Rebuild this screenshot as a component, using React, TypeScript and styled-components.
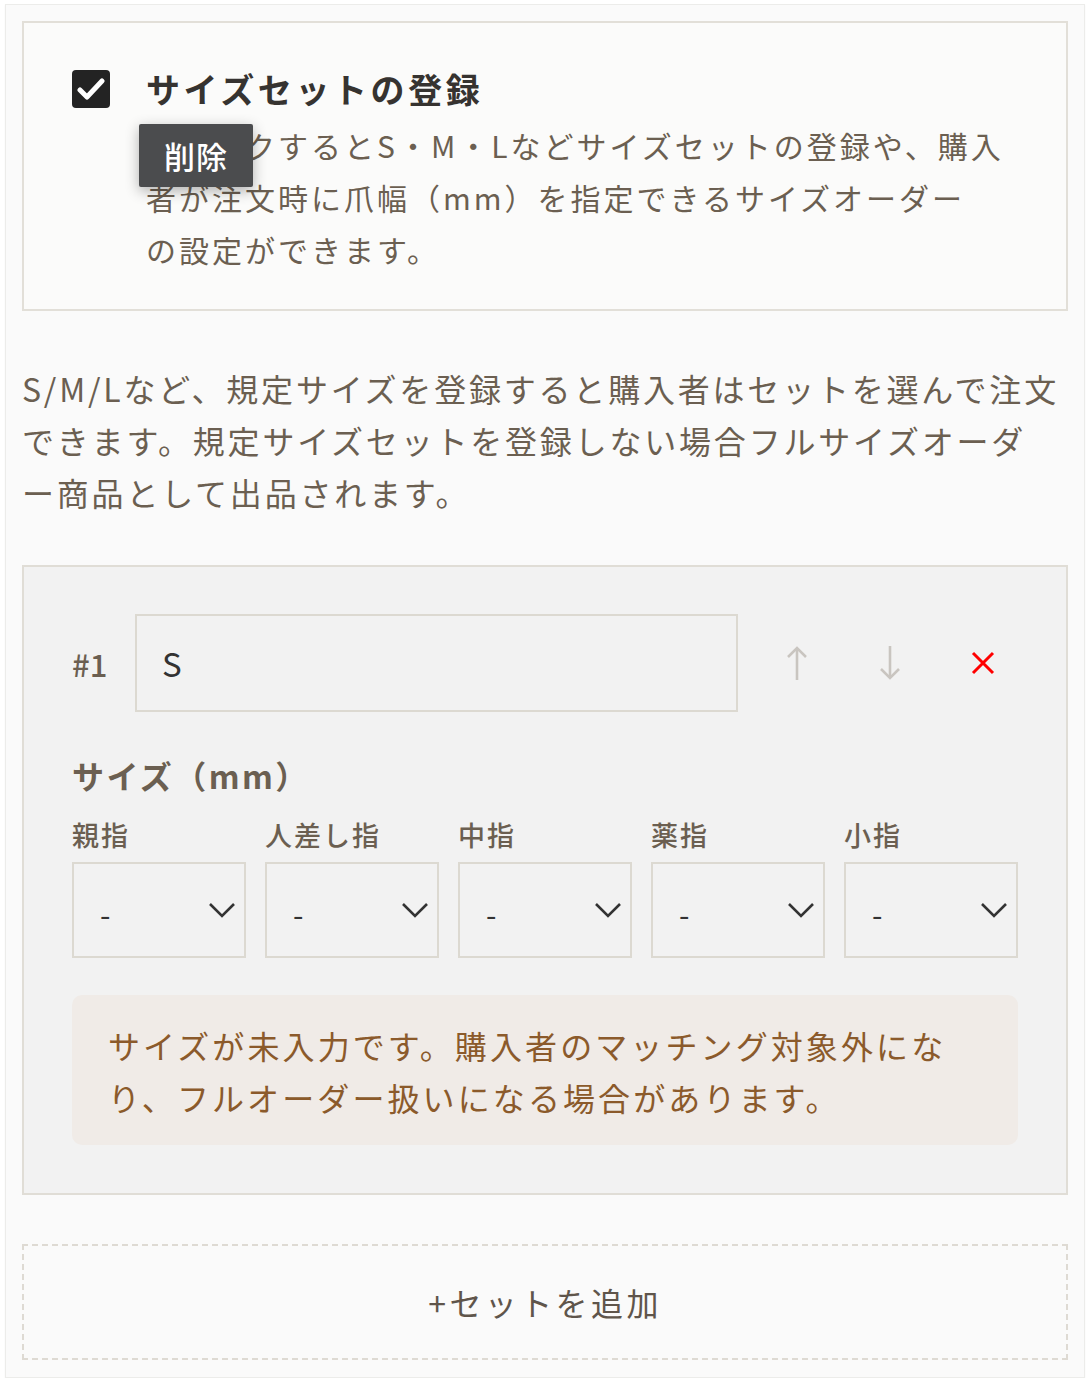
import React from "react";
import styled, { createGlobalStyle } from "styled-components";

const GlobalStyle = createGlobalStyle`
  body {
    margin: 0;
    background: #ffffff;
    font-family: "Noto Sans CJK JP", "Noto Sans", sans-serif;
  }
`;

const Card = styled.div`
  margin: 4px 5px 0;
  width: 1046px;
  padding: 16px 16px 17px;
  background: #fafafa;
  border: 1px solid #ececea;
  box-shadow: 0 1px 2px rgba(0, 0, 0, 0.04);
`;

const OptionBox = styled.div`
  position: relative;
  display: flex;
  gap: 36px;
  padding: 44px 48px 34px;
  border: 2px solid #e2dfd8;
  background: #fbfbfa;
`;

const CheckMark = styled.div`
  flex: none;
  width: 38px;
  height: 38px;
  margin-top: 3px;
  border-radius: 4px;
  background: #232323;
  display: flex;
  align-items: center;
  justify-content: center;
`;

const OptionText = styled.div`
  flex: 1;
`;

const OptionTitle = styled.div`
  margin-bottom: 8px;
  font-size: 34px;
  font-weight: 700;
  line-height: 44px;
  letter-spacing: 3.6px;
  color: #363330;
`;

const OptionDesc = styled.div`
  font-size: 30px;
  line-height: 52px;
  letter-spacing: 3px;
  color: #6b5f51;
`;

const Tooltip = styled.div`
  position: absolute;
  left: 115px;
  top: 101px;
  width: 114px;
  height: 63px;
  display: flex;
  align-items: center;
  justify-content: center;
  background: #4b4c4e;
  color: #ffffff;
  font-size: 31px;
  font-weight: 500;
  letter-spacing: 1px;
  border-radius: 2px;
  box-shadow: 0 4px 14px rgba(0, 0, 0, 0.3);
`;

const Lead = styled.p`
  margin: 51px 0 47px;
  font-size: 32px;
  line-height: 52px;
  letter-spacing: 2.8px;
  color: #6b5f51;
`;

const SetPanel = styled.div`
  padding: 47px 48px 48px;
  border: 2px solid #e0ddd6;
  background: #f2f2f2;
`;

const SetRow = styled.div`
  display: flex;
  align-items: center;
`;

const SetNumber = styled.div`
  width: 63px;
  flex: none;
  font-size: 31px;
  font-weight: 500;
  color: #6b5f51;
`;

const NameInput = styled.div`
  flex: 1;
  height: 94px;
  display: flex;
  align-items: center;
  padding: 0 25px;
  border: 2px solid #dcd9d1;
  font-size: 33px;
  color: #333;
`;

const Actions = styled.div`
  display: flex;
  gap: 47px;
  margin: 0 12px 0 36px;
`;

const IconButton = styled.button`
  width: 46px;
  height: 46px;
  padding: 0;
  border: none;
  background: none;
  display: flex;
  align-items: center;
  justify-content: center;
`;

const SizeHeading = styled.div`
  margin-top: 41px;
  font-size: 32px;
  font-weight: 700;
  line-height: 44px;
  letter-spacing: 2.4px;
  color: #6b5f51;
`;

const FingerGrid = styled.div`
  margin-top: 18px;
  display: grid;
  grid-template-columns: repeat(5, 1fr);
  gap: 7px 19px;
`;

const FingerLabel = styled.div`
  font-size: 27px;
  font-weight: 500;
  line-height: 40px;
  letter-spacing: 2px;
  color: #6b5f51;
`;

const SelectBox = styled.div`
  height: 92px;
  display: flex;
  align-items: center;
  justify-content: space-between;
  padding: 0 8px 0 26px;
  border: 2px solid #dcd9d1;
  font-size: 30px;
  color: #333;
`;

const Dash = styled.span`
  margin-top: 6px;
`;

const Notice = styled.div`
  margin-top: 37px;
  padding: 24px 36px 22px;
  border-radius: 10px;
  background: #f0ebe7;
  font-size: 32px;
  line-height: 52px;
  letter-spacing: 3.1px;
  color: #8b5a2b;
`;

const AddButton = styled.button`
  margin-top: 49px;
  width: 100%;
  height: 116px;
  border: 2px dashed #dedad3;
  background: transparent;
  font-family: inherit;
  font-size: 32px;
  letter-spacing: 3.4px;
  color: #5f554b;
`;

const Chevron = () => (
  <svg width="28" height="16" viewBox="0 0 28 16">
    <polyline points="2,2 14,14 26,2" fill="none" stroke="#333" strokeWidth="2.6" />
  </svg>
);

const Arrow = ({ down }: { down?: boolean }) => (
  <svg width="24" height="36" viewBox="0 0 24 36" style={down ? { transform: "rotate(180deg)" } : undefined}>
    <line x1="12" y1="3" x2="12" y2="35" stroke="#c9c5c0" strokeWidth="2.6" />
    <polyline points="3,12 12,3 21,12" fill="none" stroke="#c9c5c0" strokeWidth="2.6" />
  </svg>
);

const fingers = ["親指", "人差し指", "中指", "薬指", "小指"];

const App = () => {
  return (
    <Card>
      <GlobalStyle />
      <OptionBox>
        <CheckMark>
          <svg width="28" height="24" viewBox="0 0 28 24">
            <polyline points="3,13 10,20 25,4" fill="none" stroke="#fff" strokeWidth="5" strokeLinecap="round" strokeLinejoin="round" />
          </svg>
        </CheckMark>
        <OptionText>
          <OptionTitle>サイズセットの登録</OptionTitle>
          <OptionDesc>
            チェックするとS・M・Lなどサイズセットの登録や、購入者が注文時に爪幅（mm）を指定できるサイズオーダー
            <br />
            の設定ができます。
          </OptionDesc>
        </OptionText>
        <Tooltip>削除</Tooltip>
      </OptionBox>

      <Lead>
        S/M/Lなど、規定サイズを登録すると購入者はセットを選んで注文
        <br />
        できます。規定サイズセットを登録しない場合フルサイズオーダ
        <br />
        ー商品として出品されます。
      </Lead>

      <SetPanel>
        <SetRow>
          <SetNumber>#1</SetNumber>
          <NameInput>S</NameInput>
          <Actions>
            <IconButton>
              <Arrow />
            </IconButton>
            <IconButton>
              <Arrow down />
            </IconButton>
            <IconButton>
              <svg width="24" height="24" viewBox="0 0 24 24">
                <path d="M2 2 L22 22 M22 2 L2 22" stroke="#ff0000" strokeWidth="3" />
              </svg>
            </IconButton>
          </Actions>
        </SetRow>

        <SizeHeading>サイズ（mm）</SizeHeading>
        <FingerGrid>
          {fingers.map((f) => (
            <FingerLabel key={f}>{f}</FingerLabel>
          ))}
          {fingers.map((f) => (
            <SelectBox key={f + "-select"}>
              <Dash>-</Dash>
              <Chevron />
            </SelectBox>
          ))}
        </FingerGrid>

        <Notice>
          サイズが未入力です。購入者のマッチング対象外にな
          <br />
          り、フルオーダー扱いになる場合があります。
        </Notice>
      </SetPanel>

      <AddButton>+セットを追加</AddButton>
    </Card>
  );
};

export default App;
